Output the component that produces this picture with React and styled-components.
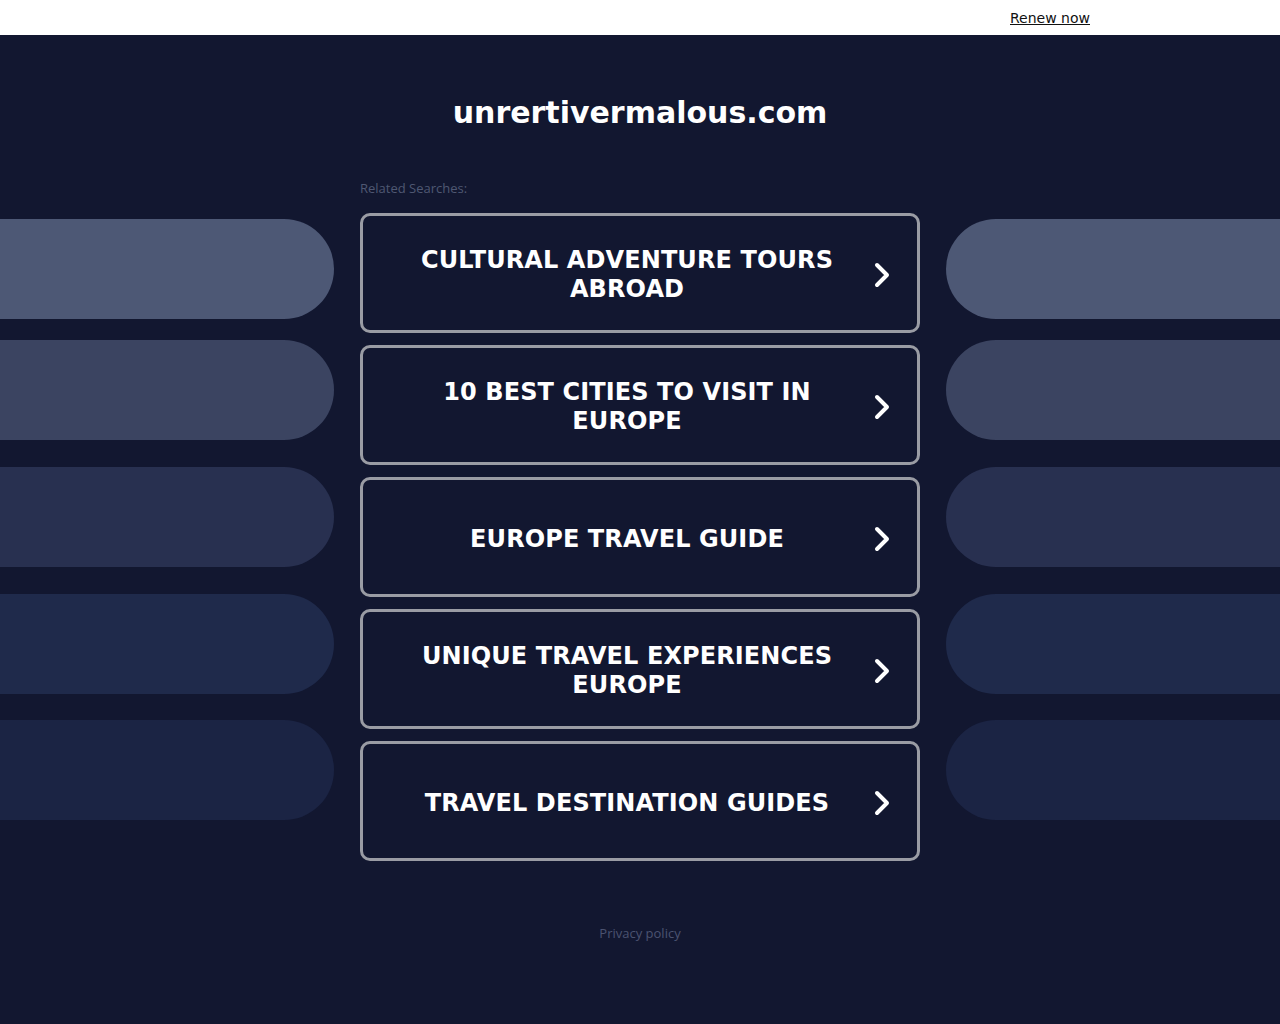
import React from 'react'
import styled, { createGlobalStyle } from 'styled-components'

const GlobalStyle = createGlobalStyle`
  html, body {
    margin: 0;
    padding: 0;
    background: #121730;
    font-family: "DejaVu Sans", sans-serif;
  }
`

const TopBar = styled.div`
  height: 35px;
  background: #ffffff;
  display: flex;
  justify-content: flex-end;
  align-items: center;
  padding-right: 190px;
  box-sizing: border-box;
`

const Renew = styled.a`
  font: 14px "DejaVu Sans", sans-serif;
  color: #111;
  text-decoration: underline;
`

const Page = styled.div`
  display: grid;
  grid-template-columns: 360px 560px 1fr;
  min-height: 989px;
`

const Side = styled.div`
  display: flex;
  flex-direction: column;
  padding-left: ${props => (props.right ? '26px' : '0')};
  padding-right: ${props => (props.right ? '0' : '26px')};
`

const Pill = styled.div`
  height: 100px;
  margin-top: ${props => props.gap}px;
  background: ${props => props.color};
  border-radius: ${props => (props.right ? '50px 0 0 50px' : '0 50px 50px 0')};
`

const Center = styled.div`
  display: flex;
  flex-direction: column;
`

const Domain = styled.h1`
  margin: 0;
  padding-top: 58px;
  font: bold 30px/40px "DejaVu Sans", sans-serif;
  color: #ffffff;
  text-align: center;
`

const Related = styled.div`
  margin-top: 46px;
  font: 13px/18px "Open Sans", sans-serif;
  color: #4f5772;
`

const List = styled.div`
  margin-top: 16px;
  display: flex;
  flex-direction: column;
  gap: 12px;
`

const Button = styled.a`
  height: 120px;
  box-sizing: border-box;
  border: 3px solid #9a9ca4;
  border-radius: 10px;
  display: flex;
  align-items: center;
  padding: 4px 24px 0 20px;
  text-decoration: none;
  cursor: pointer;
`

const Label = styled.span`
  flex: 1;
  text-align: center;
  font: bold 24px/29px "DejaVu Sans", sans-serif;
  letter-spacing: 0.1px;
  color: #ffffff;
  padding: 0 12px;
`

const Footer = styled.div`
  margin-top: 63px;
  text-align: center;
  font: 13px "Open Sans", sans-serif;
  color: #4b5370;
`

const Chevron = () => (
  <svg width="22" height="28" viewBox="0 0 22 28">
    <path
      d="M6 4 L16 14 L6 24"
      fill="none"
      stroke="#ffffff"
      strokeWidth="4"
      strokeLinecap="round"
      strokeLinejoin="round"
    />
  </svg>
)

const searches = [
  'CULTURAL ADVENTURE TOURS ABROAD',
  '10 BEST CITIES TO VISIT IN EUROPE',
  'EUROPE TRAVEL GUIDE',
  'UNIQUE TRAVEL EXPERIENCES EUROPE',
  'TRAVEL DESTINATION GUIDES',
]

// gap above each pill, first one measured from the top of the page body
const pills = [
  { color: '#4d5875', gap: 184 },
  { color: '#3b4461', gap: 21 },
  { color: '#283050', gap: 27 },
  { color: '#1f2a4b', gap: 27 },
  { color: '#1b2444', gap: 26 },
]

export default function App() {
  return (
    <>
      <GlobalStyle />
      <TopBar>
        <Renew>Renew now</Renew>
      </TopBar>
      <Page>
        <Side>
          {pills.map(p => (
            <Pill key={p.color} color={p.color} gap={p.gap} />
          ))}
        </Side>
        <Center>
          <Domain>unrertivermalous.com</Domain>
          <Related>Related Searches:</Related>
          <List>
            {searches.map(s => (
              <Button key={s}>
                <Label>{s}</Label>
                <Chevron />
              </Button>
            ))}
          </List>
          <Footer>Privacy policy</Footer>
        </Center>
        <Side right>
          {pills.map(p => (
            <Pill key={p.color} color={p.color} gap={p.gap} right />
          ))}
        </Side>
      </Page>
    </>
  )
}
